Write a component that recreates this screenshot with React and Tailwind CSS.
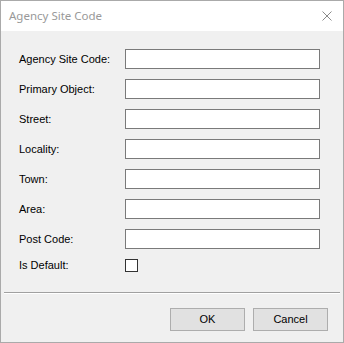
import React, { useState } from 'react';

const fields = [
  'Agency Site Code:',
  'Primary Object:',
  'Street:',
  'Locality:',
  'Town:',
  'Area:',
  'Post Code:',
];

export default function App() {
  const [isDefault, setIsDefault] = useState(false);

  return (
    <div className="w-[344px] h-[343px] flex flex-col border border-[#aaaaaa] bg-[#f0f0f0] font-['Liberation_Sans',Arial,sans-serif] text-[11px] text-black">
      {/* Title bar */}
      <div className="h-[30px] shrink-0 bg-white flex items-center justify-between pl-[8px] pr-[10px]">
        <span className="font-['Noto_Sans','Open_Sans',sans-serif] text-[11.5px] text-[#999999] pb-[1px]">Agency Site Code</span>
        <svg width="10" height="10" viewBox="0 0 10 10" className="mr-[1px]">
          <path d="M0.5 0.5 L9.5 9.5 M9.5 0.5 L0.5 9.5" stroke="#8a8a8a" strokeWidth="1" fill="none" />
        </svg>
      </div>

      {/* Form */}
      <div className="flex flex-col gap-[10px] pt-[18px] pl-[18px]">
        {fields.map((label) => (
          <div key={label} className="flex items-center h-[20px]">
            <span className="w-[106px] shrink-0">{label}</span>
            <input
              type="text"
              className="w-[195px] h-[20px] bg-white border border-[#7a7a7a] outline-none px-[2px]"
            />
          </div>
        ))}
        <div className="flex items-center h-[13px]">
          <span className="w-[106px] shrink-0">Is Default:</span>
          <button
            type="button"
            onClick={() => setIsDefault(!isDefault)}
            className="w-[13px] h-[13px] bg-white border border-[#333333] flex items-center justify-center"
          >
            {isDefault && (
              <svg width="9" height="9" viewBox="0 0 9 9">
                <path d="M1 4.5 L3.5 7 L8 1.5" stroke="#333" strokeWidth="1.3" fill="none" />
              </svg>
            )}
          </button>
        </div>
      </div>

      {/* Separator */}
      <div className="mt-[20px] mx-[3px] border-t border-[#a0a0a0] border-b border-b-white" />

      {/* Buttons */}
      <div className="flex justify-end gap-[8px] pt-[14px] pr-[15px]">
        <button className="w-[75px] h-[23px] bg-[#e1e1e1] border border-[#adadad] text-[11px]">OK</button>
        <button className="w-[75px] h-[23px] bg-[#e1e1e1] border border-[#adadad] text-[11px]">Cancel</button>
      </div>
    </div>
  );
}
